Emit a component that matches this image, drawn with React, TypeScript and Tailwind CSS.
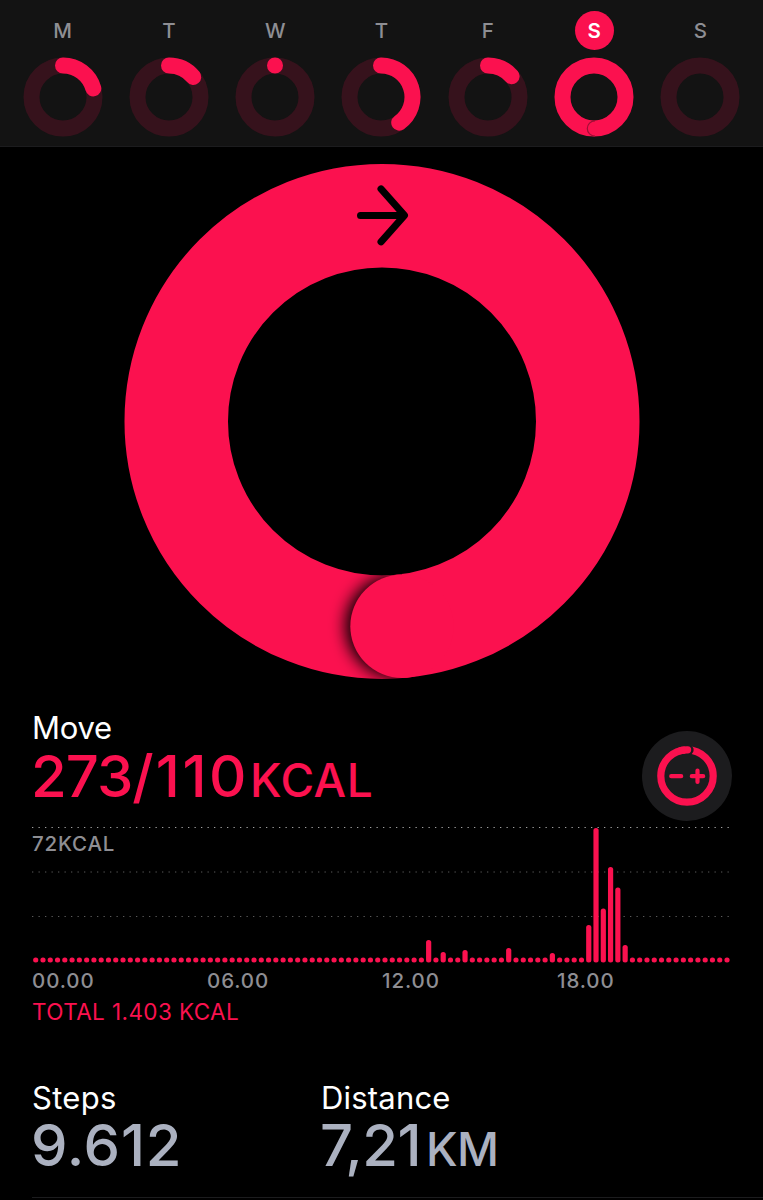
const DAYS = [
  { label: 'M', progress: 0.206 },
  { label: 'T', progress: 0.14 },
  { label: 'W', progress: 0.0001 },
  { label: 'T', progress: 0.402 },
  { label: 'F', progress: 0.135 },
  { label: 'S', progress: 1.485, active: true },
  { label: 'S', progress: 0 },
];

// One bar per 15 minutes, anything that is not listed is idle
const PEAKS: Record<number, number> = {
  54: 22.5,
  56: 10.5,
  59: 12.5,
  65: 14.5,
  71: 9.5,
  76: 37.5,
  77: 134.5,
  78: 54,
  79: 95.5,
  80: 75,
  81: 17.5,
};

const BARS = Array.from({ length: 96 }, (_, i) => PEAKS[i] ?? 5);

function arc(c: number, r: number, progress: number) {
  const a = progress * 2 * Math.PI;
  const x = c + r * Math.sin(a);
  const y = c - r * Math.cos(a);
  return `M ${c} ${c - r} A ${r} ${r} 0 ${progress > 0.5 ? 1 : 0} 1 ${x} ${y}`;
}

function DayRing({ progress }: { progress: number }) {
  const full = progress >= 1;
  return (
    <svg viewBox="0 0 80 80" className="h-20 w-20" fill="none" strokeWidth="16">
      <circle cx="40" cy="40" r="31.5" stroke={full ? '#fb114f' : '#36121c'} />
      {full && <path d="M 41 63.8 A 7.7 7.7 0 0 0 41 79.2" stroke="#a00f36" strokeWidth="1.2" />}
      {!full && progress > 0 && (
        <path d={arc(40, 31.5, progress)} stroke="#fb114f" strokeLinecap="round" />
      )}
    </svg>
  );
}

function MoveRing() {
  return (
    <svg viewBox="0 -0.4 516 516" className="h-[516px] w-[516px]" fill="none">
      <defs>
        <clipPath id="band">
          <path clipRule="evenodd" d="M 0.5 258 a 257.5 257.5 0 1 0 515 0 a 257.5 257.5 0 1 0 -515 0 Z M 104 258 a 154 154 0 1 0 308 0 a 154 154 0 1 0 -308 0 Z" />
        </clipPath>
        <clipPath id="left">
          <rect x="100" y="380" width="178" height="136" />
        </clipPath>
        <filter id="soft" x="-50%" y="-50%" width="200%" height="200%">
          <feGaussianBlur stdDeviation="8" />
        </filter>
      </defs>
      <circle cx="258" cy="258" r="205.75" stroke="#fb114f" strokeWidth="103.5" />
      <g clipPath="url(#band)">
        <g clipPath="url(#left)">
          <circle cx="273" cy="462.7" r="51.5" fill="#000" filter="url(#soft)" />
        </g>
      </g>
      <circle cx="278" cy="462.8" r="51.7" fill="#fb114f" />
      <path d="M 236.5 52 H 279 M 257 25.5 L 280.5 52 L 257 78.5" stroke="#000" strokeWidth="7" strokeLinecap="round" strokeLinejoin="round" />
    </svg>
  );
}

function GoalButton() {
  return (
    <button className="flex h-[90px] w-[90px] items-center justify-center rounded-full bg-[#1c1c1e]">
      <svg viewBox="0 0 60 60" className="h-[60px] w-[60px]" fill="none" stroke="#fb114f" strokeLinecap="round">
        <circle cx="30" cy="30" r="26.2" strokeWidth="7.2" />
        <path d="M 31.4 3.9 h 0.5" stroke="#1c1c1e" strokeWidth="9.5" />
        <path d="M 24 4.5 A 26.2 26.2 0 0 1 30.6 3.85" strokeWidth="7.2" />
        <path d="M 14.2 30.2 H 24.2 M 34.8 30.2 H 46.2 M 40.5 24.5 V 35.9" strokeWidth="4.2" />
      </svg>
    </button>
  );
}

function ActivityChart() {
  return (
    <svg viewBox="0 0 700 138" className="block h-[138px] w-[700px]">
      {[1.5, 46, 90.5].map((y, i) => (
        <line key={y} x1="0" x2="700" y1={y} y2={y} stroke={i === 0 ? '#a0a0a0' : '#5a5a5a'} strokeWidth="1.1" strokeDasharray="1.3 5.2" />
      ))}
      {BARS.map((h, i) => (
        <rect key={i} x={1.1 + i * 7.277} y={136.5 - h} width="5.2" height={h} rx="2.5" fill="#fb114f" />
      ))}
    </svg>
  );
}

export default function App() {
  return (
    <div className="h-[1200px] w-[763px] overflow-hidden bg-black font-['Inter',sans-serif]">
      {/* Week strip */}
      <header className="grid h-[147px] grid-cols-7 border-b border-[#1c1c1e] bg-[#131313] px-[9.5px] pt-[11px]">
        {DAYS.map((day, i) => (
          <div key={i} className="flex flex-col items-center gap-[7px]">
            <span
              className={`flex h-[39px] w-[39px] items-center justify-center rounded-full pt-px text-[20.5px] leading-none ${
                day.active ? 'bg-[#fb114f] font-semibold text-white' : 'font-medium text-[#8e8e93]'
              }`}
            >
              {day.label}
            </span>
            <DayRing progress={day.progress} />
          </div>
        ))}
      </header>

      <div className="flex justify-center pt-4 pl-px">
        <MoveRing />
      </div>

      <main className="pl-8">
        {/* Move summary */}
        <section className="flex h-[147px] w-[700px] items-start justify-between pt-[31px]">
          <div>
            <h2 className="h-[36px] text-[31px] leading-[36px] tracking-[-0.3px] text-white">Move</h2>
            <p className="h-[60px] text-[58px] leading-[60px] font-medium whitespace-nowrap text-[#fb114f]">
              <span className="-ml-px tracking-[-1px]">273/</span>
              <span className="ml-[3px] tracking-[2.6px]">110</span>
              <span className="ml-px text-[46px] tracking-[0.4px]">KCAL</span>
            </p>
          </div>
          <div className="pt-[21px]">
            <GoalButton />
          </div>
        </section>

        {/* Hourly chart */}
        <section className="relative">
          <ActivityChart />
          <span className="absolute top-[7px] left-0 text-[20.5px] leading-[22px] font-medium tracking-[0.8px] text-[#8e8e93]">72KCAL</span>
          <div className="grid h-[32px] w-[700px] grid-cols-4 text-[20.5px] leading-[34px] font-medium tracking-[0.9px] text-[#8e8e93]">
            <span>00.00</span>
            <span>06.00</span>
            <span>12.00</span>
            <span>18.00</span>
          </div>
          <p className="h-[30px] text-[22.5px] leading-[31px] tracking-[0.4px] text-[#fb114f]">TOTAL 1.403 KCAL</p>
        </section>

        {/* Totals */}
        <section className="flex h-[172px] border-b border-[#1c1c1e] pt-[54px]">
          <div className="w-[289px]">
            <h2 className="h-[36px] text-[31px] leading-[36px] tracking-[0.3px] text-white">Steps</h2>
            <p className="-ml-px text-[58px] leading-[58px] font-medium tracking-[0.8px] text-[#abb1c0]">9.612</p>
          </div>
          <div>
            <h2 className="h-[36px] text-[31px] leading-[36px] tracking-[0.2px] text-white">Distance</h2>
            <p className="-ml-px text-[58px] leading-[58px] font-medium whitespace-nowrap text-[#abb1c0]">
              <span className="tracking-[-0.6px]">7,21</span>
              <span className="ml-[5px] text-[46px] tracking-[-0.5px]">KM</span>
            </p>
          </div>
        </section>
      </main>
    </div>
  );
}
